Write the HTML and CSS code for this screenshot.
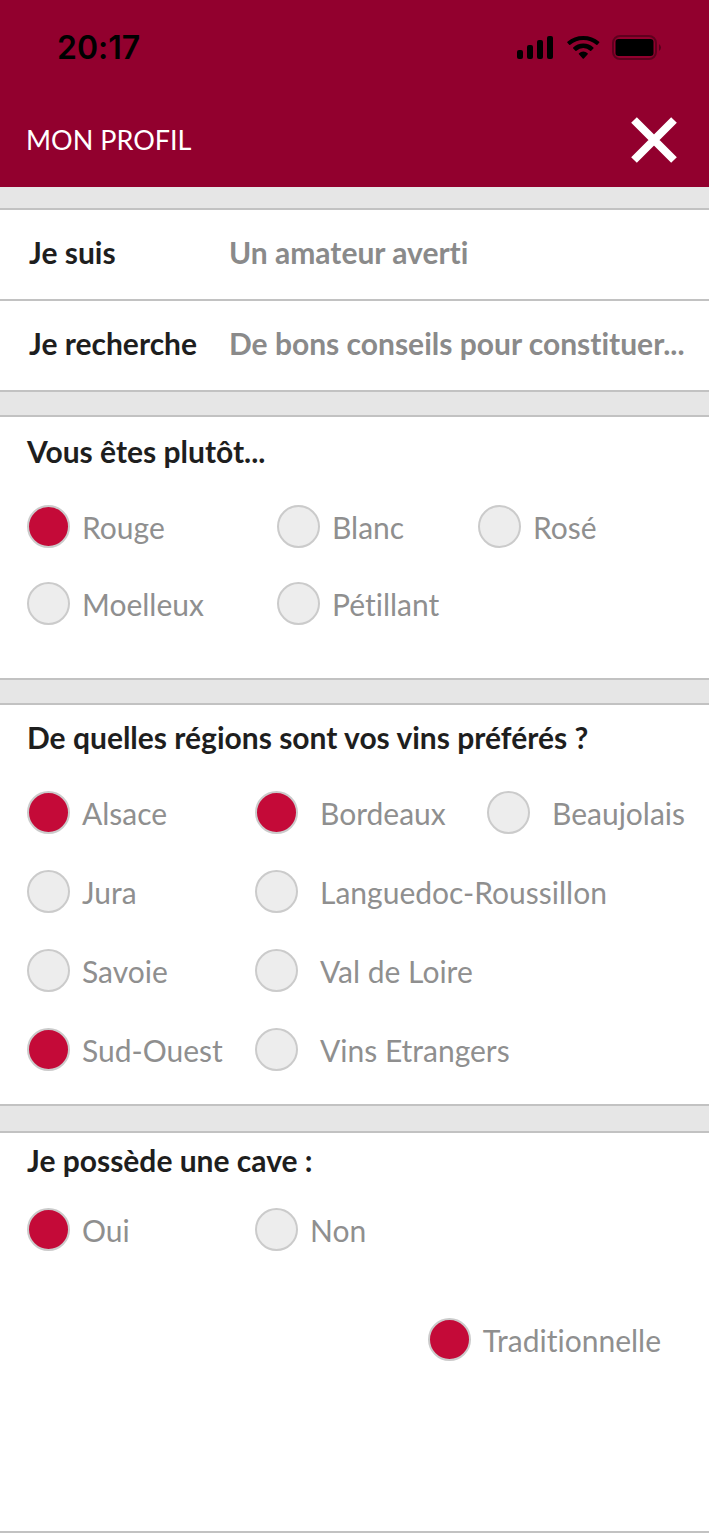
FILE: index.html
```html
<!DOCTYPE html>
<html lang="fr">
<head>
  <meta charset="UTF-8">
  <meta name="viewport" content="width=device-width, initial-scale=1.0">
  <title>Mon profil</title>
  <link rel="stylesheet" href="styles.css">
</head>
<body>

  <header class="header">
    <div class="status-bar">
      <span class="time">20:17</span>
      <svg class="status-icons" width="146" height="26" viewBox="0 0 146 26" aria-hidden="true">
        <!-- réseau -->
        <rect x="2" y="15" width="6" height="9" rx="2"/>
        <rect x="12" y="10" width="6" height="14" rx="2"/>
        <rect x="22" y="5" width="6" height="19" rx="2"/>
        <rect x="32" y="1" width="6" height="23" rx="2"/>
        <!-- wifi -->
        <path d="M52.4 7.8 Q51.9 7.3 52.4 6.8 Q59 1 68.3 1 Q77.6 1 84.2 6.8 Q84.7 7.3 84.2 7.8 L82.4 9.7 Q81.9 10.2 81.3 9.7 Q75.800 5 68.300 5 Q60.800 5 55.300 9.700 Q54.700 10.200 54.200 9.700 Z"/>
        <path d="M58.2 13.6 Q57.7 13.1 58.2 12.6 Q62.2 8.6 68.3 8.6 Q74.4 8.6 78.4 12.6 Q78.9 13.1 78.4 13.6 L76.2 15.7 Q75.700 16.200 75.100 15.700 Q72.300 12.900 68.300 12.900 Q64.300 12.900 61.500 15.700 Q60.900 16.200 60.400 15.700 Z"/>
        <path d="M63.9 19.3 Q63.4 18.7 64 18.2 Q65.8 16.5 68.3 16.5 Q70.8 16.5 72.6 18.2 Q73.2 18.7 72.7 19.3 L68.9 23.4 Q68.3 24 67.7 23.4 Z"/>
        <!-- batterie -->
        <rect x="98" y="1" width="43" height="23" rx="7" fill="none" stroke="#000" stroke-width="2" opacity=".35"/>
        <rect x="100.500" y="4" width="38" height="17" rx="3"/>
        <path d="M144 9 Q146 10.500 146 12.500 Q146 14.500 144 16 Z" opacity=".4"/>
      </svg>
    </div>
    <div class="title-bar">
      <h1>MON PROFIL</h1>
      <button type="button" class="close" aria-label="Fermer">
        <svg width="46" height="46" viewBox="0 0 46 46" aria-hidden="true">
          <path d="M3 3 L43 43 M43 3 L3 43" stroke="#fff" stroke-width="8"/>
        </svg>
      </button>
    </div>
  </header>

  <form>
    <div class="card">
      <div class="row">
        <label for="profil">Je suis</label>
        <select id="profil">
          <option>Un amateur averti</option>
        </select>
      </div>
      <div class="row">
        <label for="recherche">Je recherche</label>
        <select id="recherche">
          <option>De bons conseils pour constituer...</option>
        </select>
      </div>
    </div>

    <section class="card couleurs">
      <h2>Vous êtes plutôt...</h2>
      <div class="choices">
        <label class="choice"><input type="checkbox" checked>Rouge</label>
        <label class="choice"><input type="checkbox">Blanc</label>
        <label class="choice"><input type="checkbox">Rosé</label>
        <label class="choice"><input type="checkbox">Moelleux</label>
        <label class="choice"><input type="checkbox">Pétillant</label>
      </div>
    </section>

    <section class="card regions">
      <h2>De quelles régions sont vos vins préférés ?</h2>
      <div class="choices">
        <label class="choice"><input type="checkbox" checked>Alsace</label>
        <label class="choice spaced"><input type="checkbox" checked>Bordeaux</label>
        <label class="choice spaced"><input type="checkbox">Beaujolais</label>
        <label class="choice"><input type="checkbox">Jura</label>
        <label class="choice spaced wide"><input type="checkbox">Languedoc-Roussillon</label>
        <label class="choice"><input type="checkbox">Savoie</label>
        <label class="choice spaced wide"><input type="checkbox">Val de Loire</label>
        <label class="choice"><input type="checkbox" checked>Sud-Ouest</label>
        <label class="choice spaced wide"><input type="checkbox">Vins Etrangers</label>
      </div>
    </section>

    <section class="card cave">
      <h2>Je possède une cave :</h2>
      <div class="choices">
        <label class="choice"><input type="radio" name="cave" checked>Oui</label>
        <label class="choice"><input type="radio" name="cave">Non</label>
      </div>
      <div class="cave-type">
        <label class="choice"><input type="radio" name="type" checked>Traditionnelle</label>
      </div>
    </section>
  </form>

</body>
</html>
```

FILE: styles.css
```css
* {
  box-sizing: border-box;
}
body {
  margin: 0;
  background: #fff;
  font-family: Lato, "Open Sans", sans-serif;
  font-size: 30px;
  font-variant-ligatures: none;
  line-height: 36px;
  color: #1e1e1e;
}
h1, h2 {
  margin: 0;
}

/* En-tête */
.header {
  background: #92002e;
  color: #fff;
  padding: 28px 32px 24px 26px;
}
.status-bar {
  display: flex;
  justify-content: space-between;
  align-items: center;
  height: 40px;
  padding: 0 16px 0 31px;
  color: #000;
}
.time {
  font-family: Inter, sans-serif;
  font-size: 32px;
  font-weight: 600;
}
.title-bar {
  display: flex;
  justify-content: space-between;
  align-items: center;
  margin-top: 49px;
}
.title-bar h1 {
  font-size: 27px;
  font-weight: 400;
}
.close {
  padding: 0;
  border: none;
  background: none;
  line-height: 0;
  cursor: pointer;
}

/* Blocs */
form {
  display: flex;
  flex-direction: column;
  gap: 23px;
  padding-top: 21px;
  background: #e6e6e6;
}
.card {
  background: #fff;
  border-top: 2px solid #c2c2c2;
  border-bottom: 2px solid #c2c2c2;
}
.row {
  display: flex;
  align-items: center;
  height: 89px;
  padding: 0 20px 6px 29px;
  font-weight: 700;
}
.row + .row {
  height: 91px;
  border-top: 2px solid #c2c2c2;
}
.row label {
  flex: 0 0 200px;
}
.row select {
  flex: 1;
  min-width: 0;
  padding: 0;
  border: none;
  background: none;
  appearance: none;
  color: #8a8a8a;
  font: inherit;
  font-variant-ligatures: none;
}
.card h2 {
  font-size: 30px;
  font-weight: 700;
}

/* Choix */
.couleurs, .regions, .cave {
  padding-left: 27px;
}
.choices {
  display: grid;
  align-items: center;
}
.choice {
  display: flex;
  align-items: center;
  gap: 12px;
  color: #8f8f8f;
  white-space: nowrap;
}
.spaced {
  gap: 22px;
}
.wide {
  grid-column: span 2;
}
.choice input {
  flex: none;
  width: 43px;
  height: 43px;
  margin: 0;
  appearance: none;
  border: 2px solid #cbcbcb;
  border-radius: 50%;
  background: #ededed;
}
.choice input:checked {
  background: #c40a38;
}
.couleurs {
  padding-top: 16px;
  padding-bottom: 53px;
}
.couleurs .choices {
  grid-template-columns: 250fr 201fr 231fr;
  row-gap: 34px;
  margin-top: 36px;
}
.regions {
  padding-top: 14px;
  padding-bottom: 33px;
}
.regions .choices {
  grid-template-columns: 228fr 232fr 222fr;
  row-gap: 36px;
  margin-top: 36px;
}
.cave {
  margin-top: 2px;
  padding-top: 9px;
  padding-bottom: 170px;
}
.cave .choices {
  grid-template-columns: 228fr 454fr;
  margin-top: 30px;
}
.cave-type {
  display: flex;
  justify-content: flex-end;
  margin-top: 67px;
  padding-right: 48px;
}
```
